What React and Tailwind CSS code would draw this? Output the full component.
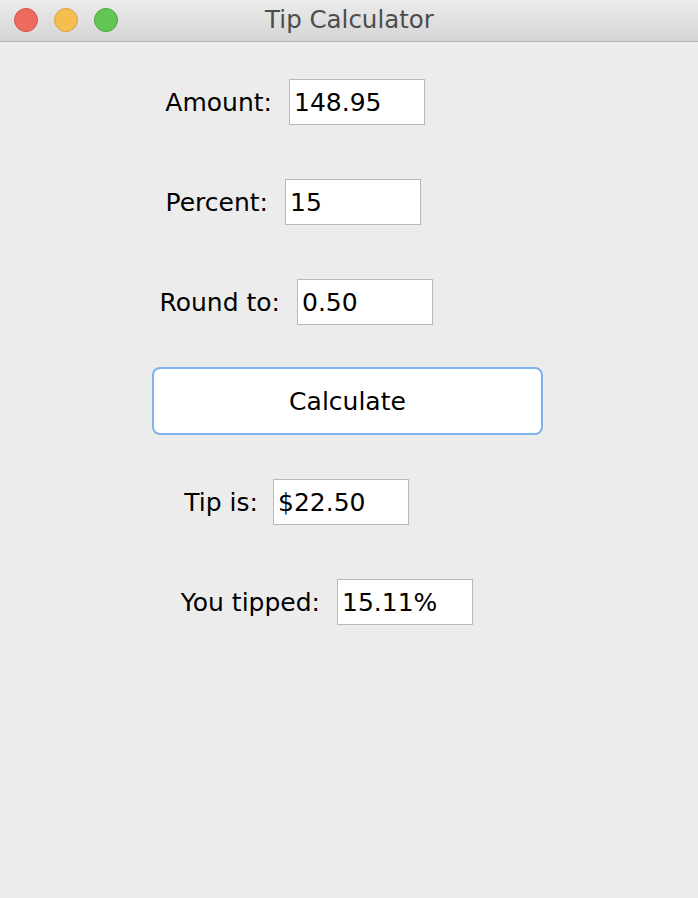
import React from 'react';

const font = { fontFamily: '"DejaVu Sans", "Liberation Sans", sans-serif' };

function Field({ label, value, labelEnd, gap = 17 }) {
  return (
    <div className="flex h-[46px] items-center">
      <div className="pt-[2px] text-right text-[25px] text-black" style={{ width: labelEnd }}>{label}</div>
      <div
        className="flex h-[46px] w-[136px] items-center border border-[#b9b9b9] bg-white pl-[4px] pt-[2px] text-[25px] text-black"
        style={{ marginLeft: gap }}
      >
        {value}
      </div>
    </div>
  );
}

export default function App() {
  return (
    <div className="flex h-[898px] w-[698px] flex-col bg-[#ececec]" style={font}>
      {/* title bar */}
      <div className="relative flex h-[42px] shrink-0 items-center justify-center border-b border-[#b1b1b1] bg-gradient-to-b from-[#ebebeb] to-[#d5d5d5]">
        <div className="absolute left-[14px] top-[8px] flex gap-[16px]">
          <span className="h-[24px] w-[24px] rounded-full border border-[#d9534a] bg-[#ee6a5f]" />
          <span className="h-[24px] w-[24px] rounded-full border border-[#d9a33d] bg-[#f6be50]" />
          <span className="h-[24px] w-[24px] rounded-full border border-[#4fa63f] bg-[#62c655]" />
        </div>
        <span className="pl-[1px] text-[24.5px] text-[#4d4d4d]">Tip Calculator</span>
      </div>

      <div className="flex flex-col pt-[37px]">
        <Field label="Amount:" value="148.95" labelEnd={272} />
        <div className="mt-[54px]">
          <Field label="Percent:" value="15" labelEnd={268} />
        </div>
        <div className="mt-[54px]">
          <Field label="Round to:" value="0.50" labelEnd={280} />
        </div>
        <div className="mt-[42px] pl-[152px]">
          <button className="flex h-[68px] w-[391px] items-center justify-center rounded-[8px] border-2 border-[#80b2ec] bg-white pt-[2px] text-[25px] text-black">
            Calculate
          </button>
        </div>
        <div className="mt-[44px]">
          <Field label="Tip is:" value="$22.50" labelEnd={258} gap={15} />
        </div>
        <div className="mt-[54px]">
          <Field label="You tipped:" value="15.11%" labelEnd={320} />
        </div>
      </div>
    </div>
  );
}
